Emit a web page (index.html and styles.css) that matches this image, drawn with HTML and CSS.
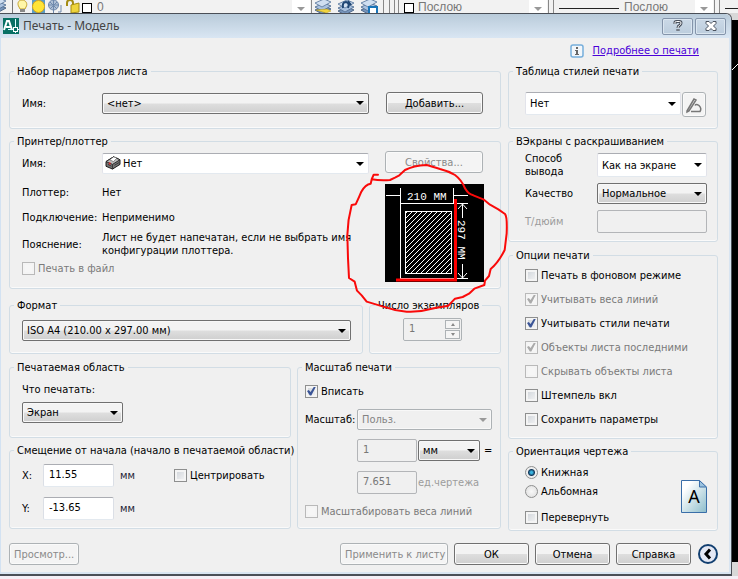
FILE: index.html
```html
<!DOCTYPE html>
<html lang="ru">
<head>
<meta charset="utf-8">
<title>Печать - Модель</title>
<link rel="stylesheet" href="styles.css">
</head>
<body>
<svg class="defs" aria-hidden="true">
  <symbol id="layers" viewBox="0 0 18 16">
    <path d="M1 11l9-4 7 3-9 5z" fill="#7795bb" stroke="#50698a"/>
    <path d="M1 8l9-4 7 3-9 5z" fill="#a9c1df" stroke="#5c789b"/>
    <path d="M1 4l9-4 7 3-9 5z" fill="#cfdef0" stroke="#6d88aa"/>
  </symbol>
</svg>
<div class="toolbar">
  <svg class="tools" width="110" height="13" viewBox="0 0 110 13">
    <use href="#layers" x="-11" y="-2" width="18" height="16"/>
    <path d="M12.500 0v13" stroke="#777"/>
    <path d="M19 7c-2-3-1-7 3-7s6 4 4 7l-1 2h-5z" fill="#fff6a8" stroke="#c4a22d"/>
    <path d="M20 9h5v3h-5z" fill="#888"/>
    <rect x="32" y="0" width="13" height="13" fill="#5b9cc4"/>
    <circle cx="38.500" cy="6.500" r="6" fill="#ffe436" stroke="#d9a514"/>
    <circle cx="53.500" cy="5" r="5" fill="#aebfd5" stroke="#6f89ad"/>
    <path d="M53.500 0v13M48 5h11M50 2l7 7M57 2l-7 7M61 5v7h-3" stroke="#6f89ad" fill="none"/>
    <path d="M67 6V3q0-3 3-3t3 3v3" fill="none" stroke="#a58c13" stroke-width="2"/>
    <path d="M71 5l8-2v9l-8 1z" fill="#eed43c" stroke="#a58c13"/>
    <rect x="82.500" y="3.500" width="9" height="9" fill="#fff" stroke="#000"/>
  </svg>
  <span class="layer-name">0</span>
  <span class="drop"></span>
  <svg class="tools" width="104" height="13" viewBox="0 0 104 13">
    <path d="M1.500 0v13M73.500 0v13M79.500 0v13M84.500 0v13M88.500 0v13" stroke="#888"/>
    <use href="#layers" x="4" y="-1" width="18" height="16"/>
    <path d="M6 10l10 3 5-2-4-2z" fill="#f2d541" stroke="#b39411" stroke-width=".5"/>
    <use href="#layers" x="27" y="0" width="18" height="16"/>
    <path d="M33 8q-1-6 3-6 4 1 2 6M38 1l3 4" fill="none" stroke="#1f4674" stroke-width="2"/>
    <use href="#layers" x="50" y="-1" width="18" height="16"/>
    <path d="M59 7h8v7h-8z" fill="#fff" stroke="#1974b8" stroke-width="2"/>
    <rect x="94.500" y="3.500" width="9" height="9" fill="#fff" stroke="#000"/>
  </svg>
  <span class="bylayer">Послою</span>
  <span class="drop"></span>
  <svg class="tools" width="74" height="13" viewBox="0 0 74 13"><path d="M1.500 0v13M6.500 0v13" stroke="#888"/><path d="M12 8.500h60" stroke="#222"/></svg>
  <span class="linetype">Послою</span>
  <span class="drop"></span>
  <svg class="tools" width="25" height="13" viewBox="0 0 25 13"><path d="M1.500 0v13M6.500 0v13" stroke="#888"/><path d="M12 8.500h13" stroke="#222"/></svg>
</div>

<div class="workspace">
<form class="dialog">
  <header class="titlebar">
    <svg width="16" height="16" viewBox="0 0 16 16" aria-hidden="true">
      <rect width="16" height="16" fill="#087064"/>
      <path d="M1 12L4 3h2l3 9M3 9h5" fill="none" stroke="#fff" stroke-width="2"/>
      <path d="M12.500 1v14M5 11.500h11" stroke="#dff" />
      <rect x="10.500" y="9.500" width="4" height="4" fill="#087064" stroke="#fff"/>
    </svg>
    <h1>Печать - Модель</h1>
    <button type="button" class="caption" aria-label="Справка по окну">
      <svg width="12" height="12" viewBox="0 0 12 12"><path d="M3 4V2.500Q3 1.500 4.500 1.500h3Q9 1.500 9 3t-1.500 2.500Q6 6 6 8M6 9v2" fill="none" stroke="#4b535f" stroke-width="3"/><path d="M3 4V2.500Q3 1.500 4.500 1.500h3Q9 1.500 9 3t-1.500 2.500Q6 6 6 8M6 9.500v1" fill="none" stroke="#fff"/></svg>
    </button>
    <button type="button" class="caption" aria-label="Закрыть">
      <svg width="12" height="12" viewBox="0 0 12 12"><path d="M1 1.500h3l2 2 2-2h3v2L8.500 6 11 8.500v2H8l-2-2-2 2H1v-2L3.500 6 1 3.500z" fill="#fff" stroke="#4b535f"/></svg>
    </button>
  </header>

  <div class="content">
    <div class="help">
      <svg width="14" height="14" viewBox="0 0 14 14" aria-hidden="true"><rect x="1" y="1" width="12" height="12" rx="2" fill="#f2f6fa" stroke="#76aedb" stroke-width="1.500"/><path d="M6 3h2v2H6zM5 6h3v4h1v1H5v-1h1V7H5z" fill="#666"/></svg>
      <a href="#">Подробнее о печати</a>
    </div>

    <div class="columns">
      <div class="left">
        <fieldset class="page-setup">
          <legend>Набор параметров листа</legend>
          <label for="setup">Имя:</label>
          <span class="select"><select id="setup"><option>&lt;нет&gt;</option></select></span>
          <button type="button">Добавить...</button>
        </fieldset>

        <fieldset class="printer">
          <legend>Принтер/плоттер</legend>
          <div class="printer-info">
            <div class="line first">
              <label for="printer">Имя:</label>
              <span class="select white with-icon">
                <svg width="16" height="14" viewBox="0 0 17 15" aria-hidden="true"><path d="M1 6l8-5 7 3v5l-8 5-7-3z" fill="#777" stroke="#111"/><path d="M1 6l8-5 7 3-8 5z" fill="#bbb" stroke="#222"/><path d="M5 4l4-3 4 1-4 4z" fill="#fff" stroke="#333" stroke-width=".5"/><path d="M8 9v5M3 9l4 2M10 10l5-3" stroke="#333"/><path d="M4 7h2v2H4z" fill="#d22"/></svg>
                <select id="printer"><option>Нет</option></select>
              </span>
            </div>
            <div class="line"><span>Плоттер:</span><span>Нет</span></div>
            <div class="line"><span>Подключение:</span><span>Неприменимо</span></div>
            <div class="line note"><span>Пояснение:</span><span>Лист не будет напечатан, если не выбрать имя конфигурации плоттера.</span></div>
            <label class="check off"><input type="checkbox" disabled>Печать в файл</label>
          </div>
          <div class="printer-side">
            <button type="button" disabled>Свойства...</button>
            <svg width="99" height="98" viewBox="0 0 99 98" role="img" aria-label="Образец листа">
              <defs><pattern id="hatch" width="5" height="5" patternUnits="userSpaceOnUse"><path d="M-1 1L1-1M-1 6L6-1M4 6l2-2" stroke="#fff"/></pattern></defs>
              <rect width="99" height="98" fill="#000"/>
              <rect x="20.500" y="27.500" width="46" height="62" fill="url(#hatch)" stroke="#fff"/>
              <path d="M15.500 4v90M68.500 4v15M1 11.500h14M69 11.500h14M15 19.500h68M15 94.500h68M77.500 20v14M77.500 80v14M73 25l4.500-5 4.500 5M73 89l4.500 5 4.500-5" stroke="#fff" fill="none"/>
              <path d="M70.500 15v82M11 96h61" stroke="#f00" stroke-width="3"/>
              <text x="22" y="16" class="dim">210 MM</text>
              <text class="dim" transform="translate(73 36) rotate(90)">297 MM</text>
            </svg>
          </div>
        </fieldset>

        <div class="row paper-row">
          <fieldset class="paper">
            <legend>Формат</legend>
            <span class="select"><select aria-label="Формат"><option>ISO A4 (210.00 x 297.00 мм)</option></select></span>
          </fieldset>
          <fieldset class="copies">
            <legend>Число экземпляров</legend>
            <span class="spinner">
              <input type="text" value="1" aria-label="Число экземпляров" disabled>
              <span class="steps"><button type="button" class="up" aria-label="Больше" disabled></button><button type="button" class="down" aria-label="Меньше" disabled></button></span>
            </span>
          </fieldset>
        </div>

        <div class="row">
          <div class="stack">
            <fieldset class="area">
              <legend>Печатаемая область</legend>
              <label for="what">Что печатать:</label>
              <span class="select"><select id="what"><option>Экран</option></select></span>
            </fieldset>
            <fieldset class="offset">
              <legend>Смещение от начала (начало в печатаемой области)</legend>
              <label for="ox">X:</label><input type="text" id="ox" value="11.55"><span class="unit">мм</span>
              <label class="check"><input type="checkbox">Центрировать</label>
              <label for="oy">Y:</label><input type="text" id="oy" value="-13.65"><span class="unit">мм</span>
            </fieldset>
          </div>
          <fieldset class="scale">
            <legend>Масштаб печати</legend>
            <label class="check"><input type="checkbox" checked>Вписать</label>
            <div class="scale-grid">
              <label for="scale">Масштаб:</label>
              <span class="select disabled wide"><select id="scale" disabled><option>Польз.</option></select></span>
              <input type="text" class="paper-units" value="1" aria-label="Единицы листа" disabled>
              <span class="select units"><select aria-label="Единицы"><option>мм</option></select></span>
              <span class="equals">=</span>
              <input type="text" class="paper-units" id="du" value="7.651" disabled>
              <label for="du" class="drawing-units">ед.чертежа</label>
            </div>
            <label class="check off"><input type="checkbox" disabled>Масштабировать веса линий</label>
          </fieldset>
        </div>
      </div>

      <div class="right">
        <fieldset class="styles">
          <legend>Таблица стилей печати</legend>
          <span class="select white"><select aria-label="Таблица стилей печати"><option>Нет</option></select></span>
          <button type="button" class="edit" aria-label="Изменить" disabled>
            <svg width="18" height="18" viewBox="0 0 18 18"><path d="M2 15L9 3l2 1-7 11-2 1zM6 15.500h9q2-3-1-6-3-2-4 0" fill="none" stroke="#777" stroke-width="1.500"/></svg>
          </button>
        </fieldset>

        <fieldset class="shaded">
          <legend>ВЭкраны с раскрашиванием</legend>
          <label for="mode">Способ вывода</label>
          <span class="select white"><select id="mode"><option>Как на экране</option></select></span>
          <label for="quality">Качество</label>
          <span class="select"><select id="quality"><option>Нормальное</option></select></span>
          <label for="dpi" class="faint">Т/дюйм</label>
          <input type="text" id="dpi" disabled>
        </fieldset>

        <fieldset class="options">
          <legend>Опции печати</legend>
          <label class="check"><input type="checkbox">Печать в фоновом режиме</label>
          <label class="check off"><input type="checkbox" checked disabled>Учитывать веса линий</label>
          <label class="check"><input type="checkbox" checked>Учитывать стили печати</label>
          <label class="check off"><input type="checkbox" checked disabled>Объекты листа последними</label>
          <label class="check off"><input type="checkbox" disabled>Скрывать объекты листа</label>
          <label class="check"><input type="checkbox">Штемпель вкл</label>
          <label class="check"><input type="checkbox">Сохранить параметры</label>
        </fieldset>

        <fieldset class="orientation">
          <legend>Ориентация чертежа</legend>
          <div>
            <label class="check"><input type="radio" name="orient" checked>Книжная</label>
            <label class="check"><input type="radio" name="orient">Альбомная</label>
            <label class="check flip"><input type="checkbox">Перевернуть</label>
          </div>
          <svg width="26" height="33" viewBox="0 0 26 33" aria-hidden="true">
            <defs><linearGradient id="sheet" x1="0" y1="0" x2="1" y2="1"><stop offset=".2" stop-color="#fff"/><stop offset="1" stop-color="#8cbdcb"/></linearGradient></defs>
            <path d="M.5.5h18l7 7v25H.5z" fill="url(#sheet)" stroke="#3a6ea8"/>
            <path d="M18.500.5v6.500h7z" fill="#9cc3df" stroke="#3a6ea8"/>
            <text x="13" y="23" text-anchor="middle" class="sheet-letter">A</text>
          </svg>
        </fieldset>
      </div>
    </div>

    <footer>
      <button type="button" class="preview" disabled>Просмотр...</button>
      <button type="button" class="apply" disabled>Применить к листу</button>
      <button type="button">ОК</button>
      <button type="button">Отмена</button>
      <button type="button">Справка</button>
      <button type="button" class="collapse" aria-label="Свернуть">
        <svg width="20" height="20" viewBox="0 0 20 20"><circle cx="10" cy="10" r="9" fill="#e4e8f4" stroke="#123f70" stroke-width="2"/><path d="M12 5.500L8 10l4 4.500" fill="none" stroke="#000" stroke-width="3"/></svg>
      </button>
    </footer>
  </div>

  <svg class="markup" width="200" height="200" viewBox="0 0 600 600" aria-hidden="true">
    <path d="M114 149L101 149L95 163Q120 167 150 165L165 158L178 151L195 135Q220 122 260 120Q275 124 300 132Q325 138 345 150Q365 165 375 190Q385 208 400 211L430 223L450 239L475 253L495 267Q502 275 500 325L494 375Q475 413 452 432L447 453L435 467L433 480L403 491L387 506L368 516L345 521L325 542L282 550Q240 562 200 560Q165 558 130 545L80 530L65 511L51 497L44 470L27 459L24 400L22 330Q23 285 35 240L47 238Q58 215 64 200Q76 178 92 176L96 160" fill="none" stroke="#fa0a0a" stroke-width="6" stroke-linejoin="round" stroke-linecap="round"/>
  </svg>
</form>
<svg class="canvas" width="6" height="100%" aria-hidden="true"><path d="M0 50l6-6M0 249.500h6" stroke="#fff" fill="none"/></svg>
</div>
<div class="statusline"></div>
</body>
</html>
```
FILE: styles.css
```css
* { box-sizing: border-box; }

body {
  margin: 0;
  min-height: 100vh;
  display: flex;
  flex-direction: column;
  background: #f0f0f0;
  color: #000;
  font: 11px/13px "DejaVu Sans Condensed", "Noto Sans", sans-serif;
}

button, input, select { font: inherit; color: inherit; margin: 0; }
.defs { position: absolute; width: 0; height: 0; }

/* Application toolbar behind the dialog */
.toolbar {
  display: flex;
  height: 13px;
  background: #f2f2f2;
  color: #777;
  font: 12px/15px "Liberation Sans", sans-serif;
}
.tools { flex: none; }
.toolbar span { flex: none; }
.toolbar .layer-name { flex: 1 1 0; margin-left: -13px; }
.bylayer { width: 115px; padding-left: 4px; }
.linetype { width: 74px; padding-left: 3px; }
.drop { width: 18px; height: 13px; background: #fff; display: grid; place-items: center; padding-top: 4px; }
.drop::after { content: ""; border: 4px solid transparent; border-top-color: #999; border-bottom: 0; }

.workspace { flex: 1; display: flex; background: linear-gradient(#d8d8d8 0 7px, #000 7px calc(100% - 14px), #d8d8d8 calc(100% - 14px)); }
.canvas { flex: none; margin-top: 7px; }
.statusline { height: 3px; background: #f4eff6; }

/* Dialog window */
.dialog {
  position: relative;
  flex: 1;
  display: flex;
  flex-direction: column;
  background: #f0f0f0;
  border: solid #4a4f57;
  border-width: 1px 1px 2px 0;
  border-radius: 0 6px 0 0;
  box-shadow: inset 1px 0 #d3e2f2, inset -2px -2px #d9e5f1;
}
.titlebar {
  display: flex;
  align-items: center;
  gap: 4px;
  height: 24px;
  padding: 0 5px 0 3px;
  border-radius: 0 6px 0 0;
  background: linear-gradient(#b9cbda, #d9e6f3);
}
h1 { flex: 1; margin: 0; font: 12px/16px "Noto Sans", sans-serif; color: #444; }
.caption {
  width: 31px;
  height: 17px;
  padding: 0;
  display: grid;
  place-items: center;
  border: 1px solid #8494aa;
  border-radius: 2px;
  background: linear-gradient(#cbd9e7, #bccddd);
  box-shadow: inset 0 0 0 1px #dbe6f0;
}
.caption + .caption { margin-left: -2px; }

.content { padding: 0 13px 8px 9px; }
.help {
  display: flex;
  justify-content: flex-end;
  align-items: center;
  gap: 9px;
  height: 27px;
  padding: 0 19px 2px 0;
}
a { color: #4b00d8; }

.columns { display: grid; grid-template-columns: minmax(0, 1fr) 210px; gap: 7px; }
.left, .right, .stack { display: flex; flex-direction: column; gap: 6px; min-width: 0; }
.row { display: flex; gap: 6px; }
.stack { flex: 1; }

fieldset {
  margin: 0;
  min-width: 0;
  padding: 0 12px;
  border: 1px solid #d2dde5;
  border-radius: 3px;
  box-shadow: inset 0 -1px #fafafa;
}
legend { padding: 0 3px; margin-left: -8px; line-height: 13px; white-space: nowrap; }
.right legend { margin-left: -12px; }

/* Controls */
button {
  height: 22px;
  padding: 0 4px;
  border: 1px solid #707070;
  border-radius: 3px;
  background: linear-gradient(#f3f3f3 0 48%, #dedede 52%, #cfcfcf);
  box-shadow: inset 0 0 0 1px #fafafa;
  white-space: nowrap;
}
button:disabled { color: #8a8a8a; border-color: #adb2b5; background: #f4f4f4; }

.select { position: relative; display: flex; height: 21px; }
.select select {
  appearance: none;
  width: 100%;
  height: 100%;
  padding: 0 16px 0 4px;
  border: 1px solid #707070;
  border-radius: 2px;
  background: linear-gradient(#f3f3f3 0 48%, #dedede 52%, #cfcfcf);
  box-shadow: inset 0 0 0 1px #f8f8f8;
}
.select::after {
  content: "";
  position: absolute;
  right: 5px;
  top: calc(50% - 2px);
  border: 4px solid transparent;
  border-top-color: #000;
  border-bottom: 0;
  pointer-events: none;
}
.select.white select { background: #fff; border-color: #abadb3 #e2e3ea #e3e9ef; box-shadow: none; }
.select.disabled select { background: #f0f0f0; border-color: #adb2b5; color: #838383; opacity: 1; }
.select.disabled::after { border-top-color: #999; }
.with-icon svg { position: absolute; left: 3px; top: 3px; }
.select.with-icon select { padding-left: 20px; }

input[type="text"] {
  min-width: 0;
  height: 23px;
  padding: 0 5px 2px;
  border: 1px solid;
  border-color: #abadb3 #dbdfe6 #e3e9ef;
  border-radius: 2px;
  background: #fff;
}
input[type="text"]:disabled { background: #f0f0f0; border-color: #b3b5b8; color: #777; }

.check { display: flex; align-items: center; gap: 3px; white-space: nowrap; }
.check input { appearance: none; flex: none; width: 13px; height: 13px; border: 1px solid #8e8f8f; }
.check input[type="checkbox"] {
  background: linear-gradient(135deg, #cdd2d8, #f6f6f6);
  box-shadow: inset 0 0 0 2px #f4f4f4;
}
.check input[type="checkbox"]:checked::before {
  content: "";
  display: block;
  width: 9px;
  height: 9px;
  margin: 1px;
  background: #3b5597;
  clip-path: polygon(0 50%, 20% 38%, 40% 62%, 78% 0, 100% 0, 48% 100%, 32% 100%);
}
.check input:disabled { border-color: #b9b9b9; background: #f6f6f6; }
.check input[type="checkbox"]:disabled:checked::before { background: #aaa; }
.check input[type="radio"] { border-radius: 50%; background: radial-gradient(#f8f8f8, #ddd); }
.check input[type="radio"]:checked { background: radial-gradient(circle, #39b4e0 0 1px, #15395c 3px, #eee 4px); }
.off { color: #7a7a7a; }
.faint { color: #9c9c9c; }

/* Left column groups */
.page-setup {
  display: grid;
  grid-template-columns: 80px minmax(0, 1fr) 97px;
  align-items: center;
  padding: 14px 17px 14px 12px;
}
.page-setup .select { margin-right: 17px; }

.printer { display: grid; grid-template-columns: minmax(0, 1fr) 99px; padding: 3px 16px 6px 12px; }
.printer-info { display: flex; flex-direction: column; }
.line { display: grid; grid-template-columns: 80px minmax(0, 1fr); align-items: center; height: 25px; }
.line .select { margin-right: 16px; }
.line.first { margin-bottom: 4px; }
.line.note { height: 28px; margin-bottom: 4px; }
.line.note span:last-child { width: 256px; }
.printer-side { display: flex; flex-direction: column; gap: 11px; }
.printer-side button { width: 98px; }
.dim { font: 11px "Liberation Mono", monospace; fill: #fff; }

.paper-row { margin: 4px 0 1px; }
.paper { flex: 1; padding: 8px 11px 12px 12px; }
.copies { width: 132px; padding: 6px 33px 11px; }
.copies legend { margin-left: -28px; }
.spinner { display: flex; width: 59px; border: 1px solid #adb2b5; border-radius: 2px; }
.spinner input[type="text"] { width: 41px; height: 21px; border: 0; }
.steps { display: grid; width: 16px; gap: 1px; padding: 1px 1px 1px 0; }
.steps button { height: 9px; padding: 0; border-radius: 0; display: grid; place-items: center; box-shadow: none; }
.steps button::after { content: ""; border: 2px solid transparent; }
.steps .up::after { border-top: 0; border-bottom: 3px solid #888; }
.steps .down::after { border-bottom: 0; border-top: 3px solid #888; }

.area { padding: 9px 12px 14px; }
.area label { display: block; margin-bottom: 6px; }
.area .select { width: 101px; }

.offset {
  display: grid;
  grid-template-columns: 21px 71px 60px 1fr;
  grid-template-rows: 23px 23px;
  row-gap: 10px;
  align-items: center;
  padding: 7px 12px 8px;
}
.unit { padding-left: 6px; color: #223; }

.scale { width: 204px; padding: 5px 8px 5px 7px; }
.scale legend { margin-left: -3px; }
.scale .check { height: 24px; }
.scale-grid {
  display: grid;
  grid-template-columns: 51px 60px 62px 1fr;
  grid-template-rows: 21px 23px 23px;
  column-gap: 1px;
  row-gap: 9px;
  align-items: center;
  padding: 6px 0 5px;
}
.wide { grid-column: 2 / 5; }
.paper-units { grid-column: 2; width: 100%; }
.equals { padding-left: 3px; }
.drawing-units { grid-column: 3 / 5; color: #9c9c9c; }

/* Right column groups */
.styles { display: flex; gap: 1px; }
.right .styles { padding: 14px 11px 11px 16px; }
.styles .select { flex: 1; height: 23px; }
.edit { width: 24px; height: 25px; padding: 0; display: grid; place-items: center; }

.shaded { display: grid; grid-template-columns: 72px minmax(0, 1fr); row-gap: 6px; align-items: center; }
.right .shaded { padding: 5px 10px 8px 16px; }
.shaded .select.white { height: 24px; }
.shaded label { max-width: 50px; }
.shaded label[for="mode"] { margin: -1px 0; }

.options { margin-top: 1px; }
.right .options { padding: 1px 8px 7px 16px; }
.options .check { height: 24px; }

.orientation { display: flex; justify-content: space-between; align-items: center; }
.right .orientation { padding: 5px 10px 1px 16px; }
.orientation .check { height: 19px; }
.orientation .check.flip { height: 24px; margin-top: 4px; }
.sheet-letter { font: 18px "Noto Sans", sans-serif; }

/* Footer */
footer { display: flex; align-items: center; gap: 6px; padding-top: 12px; }
footer button { width: 75px; }
footer .preview { width: 70px; margin-right: auto; }
footer .apply { width: 108px; }
footer .collapse { width: 21px; padding: 0; border: 0; background: none; box-shadow: none; display: grid; place-items: center; }

/* Freehand review mark drawn over the preview */
.markup { position: absolute; left: 340px; top: 111px; pointer-events: none; }
```
